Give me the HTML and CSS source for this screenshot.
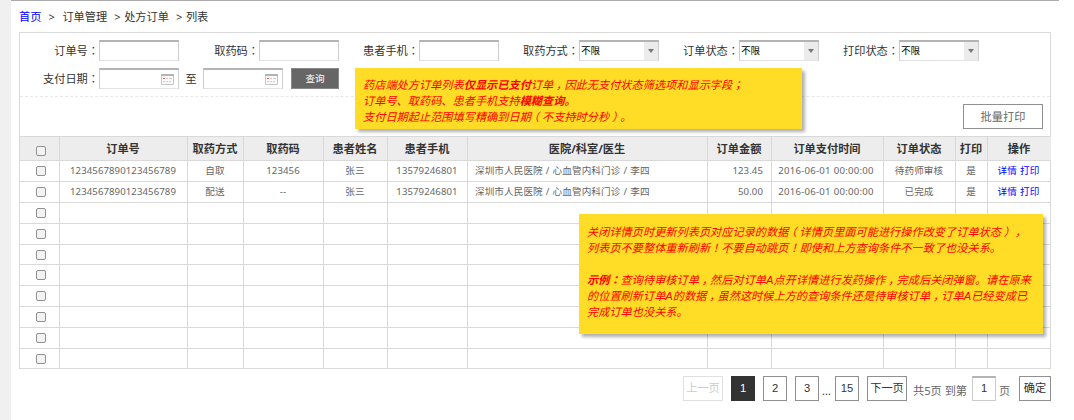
FILE: index.html
```
<!DOCTYPE html>
<html lang="zh-CN">
<head>
<meta charset="utf-8">
<title>订单列表</title>
<link rel="stylesheet" href="styles.css">
</head>
<body>
<div class="page">
  <nav class="crumbs"><a class="home">首页</a><span class="sep wide">&gt;</span><span>订单管理</span><span class="sep">&gt;</span><span>处方订单</span><span class="sep">&gt;</span><span>列表</span></nav>
  <main class="panel">
    <section class="filters">
      <div class="line">
        <label class="field"><span class="label">订单号<i class="p" lang="ja">：</i></span><span class="box"></span></label>
        <label class="field"><span class="label">取药码<i class="p" lang="ja">：</i></span><span class="box"></span></label>
        <label class="field"><span class="label">患者手机<i class="p" lang="ja">：</i></span><span class="box"></span></label>
        <label class="field"><span class="label">取药方式<i class="p" lang="ja">：</i></span><span class="box select">不限<span class="arrow"></span></span></label>
        <label class="field"><span class="label">订单状态<i class="p" lang="ja">：</i></span><span class="box select">不限<span class="arrow"></span></span></label>
        <label class="field"><span class="label">打印状态<i class="p" lang="ja">：</i></span><span class="box select">不限<span class="arrow"></span></span></label>
      </div>
      <div class="line">
        <label class="field"><span class="label">支付日期<i class="p" lang="ja">：</i></span><span class="box date"><svg class="cal" viewBox="0 0 13 11"><path d="M.5.5h12v10H.5z" fill="#fafafa" stroke="#c6c6c6"/><path d="M0 1h13" stroke="#b4b4b4" stroke-width="2"/><path d="M2 4.5h2" stroke="#e06060"/><path d="M5 4.5h2M8 4.5h3M2 7.5h2M5 7.5h2M8 7.5h2" stroke="#ccc"/></svg></span></label>
        <span class="to">至</span>
        <span class="box date"><svg class="cal" viewBox="0 0 13 11"><path d="M.5.5h12v10H.5z" fill="#fafafa" stroke="#c6c6c6"/><path d="M0 1h13" stroke="#b4b4b4" stroke-width="2"/><path d="M2 4.5h2" stroke="#e06060"/><path d="M5 4.5h2M8 4.5h3M2 7.5h2M5 7.5h2M8 7.5h2" stroke="#ccc"/></svg></span>
        <span class="query">查询</span>
      </div>
    </section>
    <div class="actions"><span class="batch">批量打印</span></div>
    <table class="orders">
      <colgroup><col class="c40"><col class="c128"><col class="c56"><col class="c80"><col class="c64"><col class="c80"><col class="c240"><col class="c64"><col class="c112"><col class="c72"><col class="c32"><col class="c63"></colgroup>
      <thead><tr><th><b class="check"></b></th><th>订单号</th><th>取药方式</th><th>取药码</th><th>患者姓名</th><th>患者手机</th><th>医院/科室/医生</th><th>订单金额</th><th>订单支付时间</th><th>订单状态</th><th>打印</th><th>操作</th></tr></thead>
      <tbody>
        <tr><td><b class="check"></b></td><td>1234567890123456789</td><td>自取</td><td>123456</td><td>张三</td><td>13579246801</td><td class="left">深圳市人民医院 / 心血管内科门诊 / 李四</td><td class="right">123.45</td><td class="time">2016-06-01 00:00:00</td><td>待药师审核</td><td>是</td><td class="links"><a>详情</a> <a>打印</a></td></tr>
        <tr><td><b class="check"></b></td><td>1234567890123456789</td><td>配送</td><td>--</td><td>张三</td><td>13579246801</td><td class="left">深圳市人民医院 / 心血管内科门诊 / 李四</td><td class="right">50.00</td><td class="time">2016-06-01 00:00:00</td><td>已完成</td><td>是</td><td class="links"><a>详情</a> <a>打印</a></td></tr>
        <tr><td><b class="check"></b></td><td></td><td></td><td></td><td></td><td></td><td></td><td></td><td></td><td></td><td></td><td></td></tr>
        <tr><td><b class="check"></b></td><td></td><td></td><td></td><td></td><td></td><td></td><td></td><td></td><td></td><td></td><td></td></tr>
        <tr><td><b class="check"></b></td><td></td><td></td><td></td><td></td><td></td><td></td><td></td><td></td><td></td><td></td><td></td></tr>
        <tr><td><b class="check"></b></td><td></td><td></td><td></td><td></td><td></td><td></td><td></td><td></td><td></td><td></td><td></td></tr>
        <tr><td><b class="check"></b></td><td></td><td></td><td></td><td></td><td></td><td></td><td></td><td></td><td></td><td></td><td></td></tr>
        <tr><td><b class="check"></b></td><td></td><td></td><td></td><td></td><td></td><td></td><td></td><td></td><td></td><td></td><td></td></tr>
        <tr><td><b class="check"></b></td><td></td><td></td><td></td><td></td><td></td><td></td><td></td><td></td><td></td><td></td><td></td></tr>
        <tr><td><b class="check"></b></td><td></td><td></td><td></td><td></td><td></td><td></td><td></td><td></td><td></td><td></td><td></td></tr>
      </tbody>
    </table>
  </main>
  <div class="pager">
    <span class="pg word off">上一页</span><span class="pg on">1</span><span class="pg">2</span><span class="pg">3</span><span class="dots">...</span><span class="pg">15</span><span class="pg word">下一页</span><span class="total">共5页 到第</span><span class="pg goto">1</span><span class="unit">页</span><span class="pg ok">确定</span>
  </div>
</div>
<aside class="note note-filter">药店端处方订单列表<strong>仅显示已支付</strong>订单<i class="c">，</i>因此无支付状态筛选项和显示字段<i class="p" lang="ja">；</i><br>订单号、取药码、患者手机支持<strong>模糊查询。</strong><br>支付日期起止范围填写精确到日期<i class="c">（</i>不支持时分秒<i class="c">）</i>。</aside>
<aside class="note note-list">关闭详情页时更新列表页对应记录的数据<i class="c">（</i>详情页里面可能进行操作改变了订单状态<i class="c">）</i><i class="c">，</i><br>列表页不要整体重新刷新<i class="p" lang="ja">！</i>不要自动跳页<i class="p" lang="ja">！</i>即使和上方查询条件不一致了也没关系。<br><br><strong>示例<i class="p" lang="ja">：</i></strong>查询待审核订单<i class="c">，</i>然后对订单A点开详情进行发药操作<i class="c">，</i>完成后关闭弹窗。请在原来<br>的位置刷新订单A的数据<i class="c">，</i>虽然这时候上方的查询条件还是待审核订单<i class="c">，</i>订单A已经变成已<br>完成订单也没关系。</aside>
</body>
</html>
```

FILE: styles.css
```
* { box-sizing: border-box; }
body {
  margin: 0;
  height: 420px;
  overflow: hidden;
  position: relative;
  background: #fff;
  color: #333;
  font: 11.2px/16px "Noto Sans", "Noto Sans CJK SC", sans-serif;
  font-kerning: none;
  text-spacing-trim: space-all;
  white-space: nowrap;
}
.page {
  width: 1059px;
  height: 420px;
  padding-left: 8px;
  border-left: 11px solid #f0f0f0;
  background: linear-gradient(#aaa, #aaa) 0 0 / 100% 1px no-repeat;
}
.crumbs { display: flex; height: 32px; padding-top: 9px; }
.home { color: #00f; }
.sep { width: 17px; padding-left: 7px; }
.sep.wide { width: 21px; }
.p { font-family: "Noto Sans CJK JP", sans-serif; font-style: inherit; line-height: 0; }
/* half-width punctuation centred in a full-width cell */
.c { font-style: inherit; font-feature-settings: "halt"; padding: 0 2.8px; }

.panel { width: 1032px; border: 1px solid #d9d9d9; border-bottom: 0; }
.filters { height: 64px; padding-top: 7px; border-bottom: 1px dashed #e8e8e8; }
.line { display: flex; height: 28px; align-items: flex-start; }
.field { display: flex; width: 160px; flex: none; }
.line .field:first-child { width: 159px; }
.label { width: 80px; text-align: right; line-height: 21px; }
.line .field:first-child .label { width: 79px; }
.box {
  width: 80px;
  height: 21px;
  flex: none;
  border: 1px solid #ccc;
  border-top: 2px solid #b3b3b3;
  border-bottom-color: #e3e3e3;
  background: #fff;
}
.select { display: flex; justify-content: space-between; padding-left: 1px; font-size: 9.6px; line-height: 18px; color: #000; }
.arrow {
  width: 14px;
  height: 18px;
  display: flex;
  align-items: center;
  justify-content: center;
  background: #ebebeb;
}
.arrow::after { content: ""; border: 3.5px solid transparent; border-top: 4px solid #777; border-bottom: 0; }
.date { display: flex; align-items: center; justify-content: flex-end; padding-right: 4px; }
.cal { width: 13px; height: 11px; }
.to { width: 24px; text-align: center; line-height: 21px; }
.query { width: 48px; height: 21px; margin-left: 8px; border: 1px solid #888; background: #666; color: #fff; font-size: 9.6px; line-height: 19px; text-align: center; }
.actions { height: 39px; display: flex; justify-content: flex-end; padding: 7px 7px 0 0; }
.batch { width: 80px; height: 25px; border: 1px solid #909090; color: #666; line-height: 23px; text-align: center; }

.orders { width: 1031px; table-layout: fixed; border-collapse: separate; border-spacing: 0; border-top: 1px solid #d9d9d9; }
.c32 { width: 32px; }
.c40 { width: 40px; }
.c56 { width: 56px; }
.c63 { width: 63px; }
.c64 { width: 64px; }
.c72 { width: 72px; }
.c80 { width: 80px; }
.c112 { width: 112px; }
.c128 { width: 128px; }
.c240 { width: 240px; }
.orders th, .orders td { padding: 0 1px 0 0; border-right: 1px solid #d9d9d9; border-bottom: 1px solid #d9d9d9; text-align: center; }
.orders th { height: 24px; background: #ededed; }
.orders td { height: 21px; padding-bottom: 2px; color: #666; font-size: 9.6px; line-height: 15px; letter-spacing: 0.09px; word-spacing: 0.5px; }
.orders tbody tr:nth-child(5n) td { height: 20px; }
.orders th:last-child, .orders td:last-child { border-right: 0; }
.orders .left { text-align: left; padding-left: 7px; }
.orders .right { text-align: right; padding-right: 8px; }
.orders .time { letter-spacing: 0.22px; padding-right: 3px; }
.orders .links { color: #00f; padding-right: 2px; }
.check { display: block; width: 10px; height: 10px; margin: 2px auto 0 16px; border: 1px solid #909090; border-radius: 2px; background: #f3f3f3; }
th .check { margin-top: 4px; }

.pager { width: 1032px; display: flex; justify-content: flex-end; padding-top: 7px; }
.pg { width: 24px; height: 25px; margin-left: 8px; border: 1px solid #909090; color: #333; font-family: "Liberation Sans", "Noto Sans CJK SC", sans-serif; line-height: 23px; text-align: center; }
.word { width: 40px; }
.off { color: #ccc; border-color: #e0e0e0; }
.on { background: #333; border-color: #333; color: #fff; }
.dots { width: 16px; margin-right: -8px; padding-left: 3px; line-height: 30px; }
.total { width: 59px; margin-left: 6px; color: #666; line-height: 29px; }
.goto { margin-left: 0; border-color: #ccc; border-top: 2px solid #b3b3b3; line-height: 21px; }
.unit { width: 15px; margin-left: 3px; margin-right: 1px; color: #666; line-height: 29px; }
.ok { width: 32px; margin-left: 4px; }

.note { position: absolute; background: #ffdc25; color: #f00; font-family: "Liberation Sans", "Noto Sans CJK SC", sans-serif; font-style: italic; box-shadow: 3px 3px 3px rgba(0, 0, 0, .3); }
.note .p { font-family: "Noto Sans CJK JP", sans-serif; }
.note-filter { left: 355px; top: 68px; width: 447px; height: 61px; padding: 9px 8px; }
.note-list { left: 579px; top: 214px; width: 464px; height: 120px; padding: 10px 8px; }
```
